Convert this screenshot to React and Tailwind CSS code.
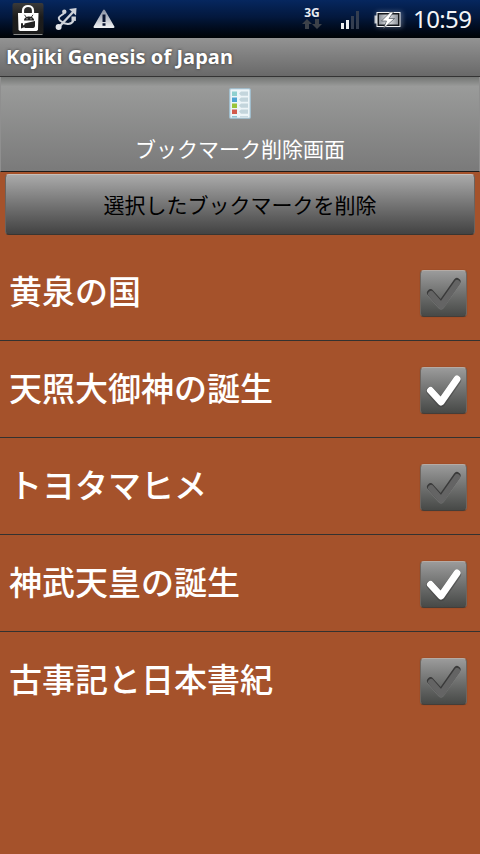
import { useState } from 'react';

const BOOKMARKS = [
  { id: 1, title: '黄泉の国', checked: false },
  { id: 2, title: '天照大御神の誕生', checked: true },
  { id: 3, title: 'トヨタマヒメ', checked: false },
  { id: 4, title: '神武天皇の誕生', checked: true },
  { id: 5, title: '古事記と日本書紀', checked: false },
];

const MarketIcon = () => (
  <svg width="32" height="34" viewBox="0 0 32 34">
    <defs>
      <linearGradient id="market" x1="0" y1="0" x2="0" y2="1">
        <stop offset="0" stopColor="#3a3a3a" />
        <stop offset="0.45" stopColor="#1c1c1c" />
        <stop offset="1" stopColor="#1b1b1b" />
      </linearGradient>
    </defs>
    <rect x="0.5" y="1" width="31" height="31.5" rx="2" fill="url(#market)" />
    <path d="M1.5 32.5h29" stroke="#8a8a8a" strokeWidth="1" />
    <path d="M11 11.500V8.500c0-6 10-6 10 0V11.500" fill="none" stroke="#fff" strokeWidth="2.2" />
    <path d="M6 11h20.500l-.5 17L24.500 29H8L6.500 28z" fill="#fff" />
    {/* android peeking out, holding its arm across the bag */}
    <path d="M12 18.500c0-4.500 8-5.500 9.800-1.500l.4 1.500z" fill="#222" />
    <path d="M12.500 12.800l1.800 2.500M21 12.800l-1.800 2.500" stroke="#222" strokeWidth="0.900" />
    <path d="M12.500 21.500l10.500-2.500v4.500c0 2-1 2.500-3 2.500h-7.500z" fill="#222" />
    <path d="M10 22v3l6-2.500" fill="none" stroke="#222" strokeWidth="2" strokeLinecap="round" />
    <circle cx="15" cy="16.800" r="0.6" fill="#fff" />
    <circle cx="19" cy="16.800" r="0.6" fill="#fff" />
  </svg>
);

const UsbIcon = () => (
  <svg width="24" height="24" viewBox="0 0 24 24" fill="none" stroke="#cfd3da" strokeWidth="2">
    <path d="M4 20L19 4" strokeWidth="2.400" />
    <path d="M14 2L21.500 1L21 8.500z" fill="#cfd3da" stroke="none" />
    <path d="M8 15.500L5 13.500C3 11.500 3.500 10 6 8.500L9 6.500" />
    <path d="M7.500 16l4 .8c3 .6 5.500-.2 7-3.300" />
    <circle cx="3.600" cy="20" r="3" fill="#e2e5ea" stroke="none" />
    <circle cx="9.300" cy="4.800" r="2.200" fill="#cfd3da" stroke="none" />
    <rect x="16.500" y="9.500" width="4.400" height="4.400" fill="#cfd3da" stroke="none" />
  </svg>
);

const WarningIcon = () => (
  <svg width="22" height="20" viewBox="0 0 22 20">
    <defs>
      <linearGradient id="warn" x1="0" y1="0" x2="0" y2="1">
        <stop offset="0" stopColor="#8b93a5" />
        <stop offset="1" stopColor="#eceef1" />
      </linearGradient>
    </defs>
    <path d="M11 1.500L20.500 18H1.500z" fill="url(#warn)" stroke="url(#warn)" strokeWidth="2" strokeLinejoin="round" />
    <path d="M9.500 5.500h3v7.500h-3zM9.500 14.200h3v2.600h-3z" fill="#08132f" />
  </svg>
);

const NetworkIcon = () => (
  <div className="flex w-5 flex-col items-center">
    <span className="text-[12px] leading-[10px] font-bold text-[#e8ebf1]">3G</span>
    <svg width="20" height="11" viewBox="0 0 20 11" className="mt-px fill-[#3c4149]">
      <path d="M5 0l5 5H7v5H3V5H0z" />
      <path d="M15 10l5-5h-3V0h-4v5h-3z" />
    </svg>
  </div>
);

const SignalIcon = () => (
  <svg width="18" height="18" viewBox="0 0 18 18">
    <path d="M0 12h3v6H0zM5 9h3v9H5z" fill="#eef0f2" />
    <path d="M10 5h3v13h-3zM15 0h3v18h-3z" fill="#343e50" />
  </svg>
);

const BatteryIcon = () => (
  <svg width="34" height="24" viewBox="0 0 34 24" className="overflow-visible">
    <defs>
      <linearGradient id="battery" x1="0" y1="0" x2="1" y2="0">
        <stop offset="0" stopColor="#8c929b" />
        <stop offset="0.5" stopColor="#e4e6e9" />
        <stop offset="1" stopColor="#8d929a" />
      </linearGradient>
    </defs>
    <rect x="4" y="3" width="27" height="17" rx="3" fill="#aab4c8" opacity="0.35" className="blur-[2px]" />
    <rect x="2.500" y="7.500" width="3" height="8" fill="#c9cdd3" />
    <rect x="5" y="4.500" width="23" height="14" fill="#15181d" stroke="#f2f3f5" />
    <rect x="7" y="6.500" width="19" height="10" fill="url(#battery)" />
    <path d="M18.500 4L9.500 13h5L11.500 20.500L22.500 10.500h-5.500L21.500 4z" fill="#fff" stroke="#333a44" strokeWidth="0.600" />
  </svg>
);

const StatusBar = () => (
  <div className="flex h-[38px] items-center bg-linear-to-b from-[#06275f] via-[#03183d] via-45% to-[#000306] pr-[7px] pl-3">
    <MarketIcon />
    <div className="ml-[11px]">
      <UsbIcon />
    </div>
    <div className="ml-[14px] pb-px">
      <WarningIcon />
    </div>
    <div className="ml-auto flex items-center">
      <NetworkIcon />
      <div className="ml-[19px] pt-px">
        <SignalIcon />
      </div>
      <div className="ml-[13px] pt-px">
        <BatteryIcon />
      </div>
      <span className="ml-[7px] w-[60px] text-[24px] leading-[38px] tracking-[-0.6px] whitespace-nowrap text-[#f4f5f7]">
        10:59
      </span>
    </div>
  </div>
);

const LIST_ROWS = ['#8fd0cf', '#4ea3d2', '#9ac43a', '#d25a4b'];

const ListIcon = () => (
  <svg width="22" height="31" viewBox="0 0 22 31">
    <rect x="0.75" y="0.75" width="20.5" height="29.5" rx="1" fill="#edf5f8" stroke="#9fc0d2" strokeWidth="1.2" />
    {LIST_ROWS.map((color, i) => (
      <g key={color}>
        <rect x="3" y={3.5 + i * 6} width="5" height="4.5" fill={color} />
        <path d="M0 2l2-2h7v4.200H2z" transform={`translate(10 ${3.5 + i * 6})`} fill="#c3d5dc" />
      </g>
    ))}
    <path d="M3 28h5v1.500H3z" fill="#8fc3d3" />
    <path d="M11 28h8v1.500h-8z" fill="#c9dbe2" />
  </svg>
);

const CheckButton = ({ checked, onChange }) => (
  <button
    type="button"
    role="checkbox"
    aria-checked={checked}
    onClick={onChange}
    className="h-[47px] w-[47px] shrink-0 rounded-[4px] border border-t-[#b5aba5] border-r-[#6e655f] border-b-[#453d38] border-l-[#6e655f] bg-linear-to-b from-[#9b9b9b] to-[#474947] shadow-[0_0_1px_#7a3a1c]"
  >
    <svg width="45" height="45" viewBox="0 0 45 45" fill="none" strokeLinecap="round" strokeLinejoin="round">
      {checked ? (
        <>
          <path d="M9.500 23L20 35L36 12" stroke="#3c3c3c" strokeOpacity="0.5" strokeWidth="8.500" />
          <path d="M9.500 22.500L20 34L36 11" stroke="#fff" strokeWidth="7" />
        </>
      ) : (
        <>
          <path d="M9.500 23L20 35L36 12" stroke="#8f8f8f" strokeOpacity="0.4" strokeWidth="7" />
          <path d="M9.500 21.800L20 33.500L36 10.500" stroke="#3a3a3a" strokeWidth="7" />
          <path d="M10 23L20.200 34.800L36.200 11.900" stroke="#646464" strokeWidth="6" />
        </>
      )}
    </svg>
  </button>
);

const BookmarkRow = ({ bookmark, last, onToggle }) => (
  <li
    className={`flex h-[97px] items-center justify-between border-b pt-[3px] pr-[13px] pl-[9px] ${
      last ? 'border-transparent' : 'border-[#333230]'
    }`}
  >
    <span className="pb-[3px] text-[33px] leading-[44px] font-medium whitespace-nowrap text-white">
      {bookmark.title}
    </span>
    <CheckButton checked={bookmark.checked} onChange={() => onToggle(bookmark.id)} />
  </li>
);

const App = () => {
  const [bookmarks, setBookmarks] = useState(BOOKMARKS);

  const toggle = (id) => {
    setBookmarks(bookmarks.map((b) => (b.id === id ? { ...b, checked: !b.checked } : b)));
  };

  const removeChecked = () => {
    setBookmarks(bookmarks.filter((b) => !b.checked));
  };

  return (
    <div className="flex h-screen w-full flex-col overflow-hidden bg-[#a5522b] font-['Noto_Sans','Noto_Sans_CJK_JP',sans-serif]">
      <StatusBar />

      <header className="h-[39px] border-b border-[#343434] bg-linear-to-b from-[#939393] to-[#696969] pl-1.5">
        <h1 className="text-[20px] leading-[37px] font-bold tracking-[0.06px] whitespace-nowrap text-white [text-shadow:0_0_3px_#333]">
          Kojiki Genesis of Japan
        </h1>
      </header>

      <div className="flex h-[95px] flex-col items-center border-x border-b border-x-[#8f8f8f] border-b-[#1f1b19] bg-linear-to-b from-[#747674] via-[#9a9b9a] via-10% to-[#7a7a7a] pt-[11px]">
        <ListIcon />
        <h2 className="mt-[15px] text-[21px] leading-[30px] whitespace-nowrap text-white">ブックマーク削除画面</h2>
      </div>

      <div className="px-[5px] pt-0.5 pb-[9px]">
        <button
          type="button"
          onClick={removeChecked}
          className="block h-[61px] w-full rounded-[4px] border border-t-[#c5bfbb] border-r-[#6b625d] border-b-[#393531] border-l-[#6b625d] bg-linear-to-b from-[#aaaaaa] to-[#434343] pt-0.5 text-[21px] text-black"
        >
          選択したブックマークを削除
        </button>
      </div>

      <ul>
        {bookmarks.map((b, i) => (
          <BookmarkRow key={b.id} bookmark={b} last={i === bookmarks.length - 1} onToggle={toggle} />
        ))}
      </ul>
    </div>
  );
};

export default App;
